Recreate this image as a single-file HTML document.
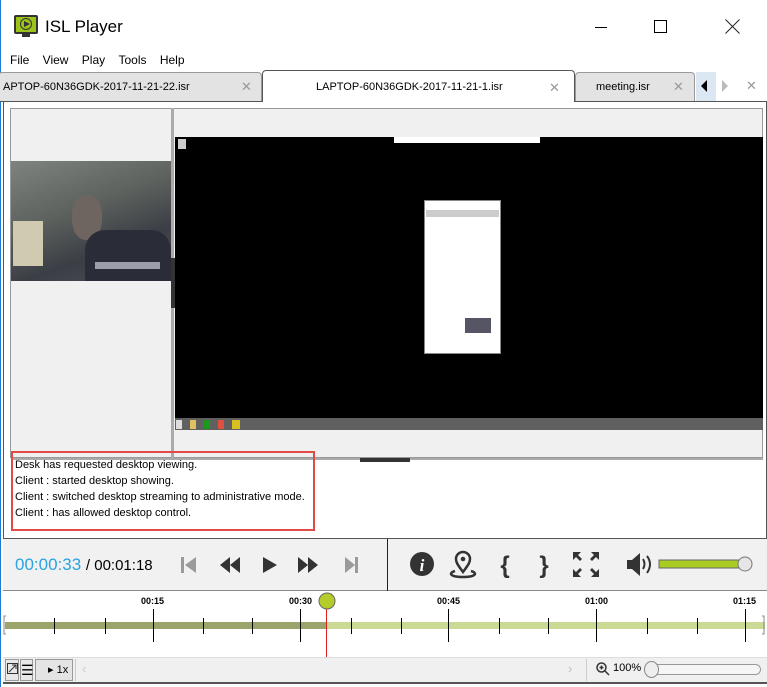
<!DOCTYPE html>
<html><head><style>
*{margin:0;padding:0;box-sizing:border-box}
body{width:767px;height:687px;overflow:hidden;background:#fff;font-family:"Liberation Sans",sans-serif;position:relative;font-size:12px;color:#000}
.a{position:absolute}
.tab{position:absolute;top:72px;height:29px;border:1px solid #999;border-bottom:none;background:#e3e3e3;font-size:11px;line-height:28px;border-radius:4px 4px 0 0}
.x{position:absolute;color:#999;font-size:13px;top:0}
.log div{height:16px;line-height:16px;font-size:11px;padding-left:5px}
.tl{position:absolute;font-size:9px;font-weight:bold;top:596px}
</style></head><body>
<div class="a" style="left:0;top:0;width:1px;height:687px;background:#1e7bd6"></div>
<div class="a" style="left:14px;top:15px;width:24px;height:19px;background:#9cc31a;border:2px solid #333;border-radius:2px"></div>
<div class="a" style="left:20px;top:18px;width:12px;height:12px;border:1.5px solid #333;border-radius:50%"></div>
<div class="a" style="left:24px;top:21px;width:0;height:0;border-left:6px solid #333;border-top:3.5px solid transparent;border-bottom:3.5px solid transparent"></div>
<div class="a" style="left:22px;top:34px;width:8px;height:3px;background:#333"></div>
<div class="a" style="left:45px;top:17px;font-size:17px">ISL Player</div>
<div class="a" style="left:595px;top:27px;width:12px;height:1px;background:#000"></div>
<div class="a" style="left:654px;top:20px;width:13px;height:13px;border:1px solid #000"></div>
<svg class="a" style="left:725px;top:19px" width="15" height="15"><path d="M0.5 0.5L14.5 14.5M14.5 0.5L0.5 14.5" stroke="#222" stroke-width="1"/></svg>
<div class="a" style="left:10px;top:53px;font-size:12px;word-spacing:0">File&nbsp;&nbsp;&nbsp;&nbsp;View&nbsp;&nbsp;&nbsp;&nbsp;Play&nbsp;&nbsp;&nbsp;&nbsp;Tools&nbsp;&nbsp;&nbsp;&nbsp;Help</div>
<div class="a" style="left:0;top:101px;width:767px;height:1px;background:#555"></div>
<div class="tab" style="left:-2px;width:264px;padding-left:4px">APTOP-60N36GDK-2017-11-21-22.isr<span class="x" style="left:242px">✕</span></div>
<div class="tab" style="left:575px;width:120px;padding-left:20px">meeting.isr<span class="x" style="left:97px">✕</span></div>
<div class="tab" style="left:262px;top:70px;height:33px;width:313px;background:#fff;border-color:#555;padding-left:53px;line-height:33px">LAPTOP-60N36GDK-2017-11-21-1.isr<span class="x" style="left:286px">✕</span></div>
<div class="a" style="left:696px;top:72px;width:20px;height:29px;background:#dbe7f3"></div>
<div class="a" style="left:701px;top:80px;border-right:6px solid #000;border-top:6px solid transparent;border-bottom:6px solid transparent"></div>
<div class="a" style="left:722px;top:80px;border-left:6px solid #bbb;border-top:6px solid transparent;border-bottom:6px solid transparent"></div>
<div class="a" style="left:746px;top:78px;color:#999;font-size:13px">✕</div>
<div class="a" style="left:3px;top:102px;width:764px;height:436px;border-left:1px solid #555;border-right:1px solid #555;background:#fff"></div>
<div class="a" style="left:10px;top:108px;width:753px;height:350px;background:#f0f0f0;border:1px solid #999"></div>
<div class="a" style="left:171px;top:108px;width:3px;height:350px;background:#aaa"></div>
<div class="a" style="left:171px;top:258px;width:4px;height:50px;background:#333"></div>
<div class="a" style="left:11px;top:161px;width:160px;height:120px;background:linear-gradient(160deg,#7d837f 0%,#5d625e 40%,#3b3e45 70%,#4d5158 100%)"></div>
<div class="a" style="left:13px;top:221px;width:30px;height:45px;background:#cfcab0"></div>
<div class="a" style="left:72px;top:195px;width:30px;height:45px;border-radius:45%;background:#6f6560"></div>
<div class="a" style="left:85px;top:230px;width:86px;height:51px;background:#2a2d38;border-radius:20px 20px 0 0"></div>
<div class="a" style="left:95px;top:262px;width:65px;height:7px;background:#9a9ea8"></div>
<div class="a" style="left:175px;top:137px;width:588px;height:293px;background:#000"></div>
<div class="a" style="left:175px;top:418px;width:588px;height:12px;background:#606060"></div>
<div class="a" style="left:176px;top:420px;width:68px;height:9px;background:linear-gradient(90deg,#ddd 0 6px,#606060 6px 14px,#e0c060 14px 20px,#606060 20px 28px,#1a9a1a 28px 34px,#606060 34px 42px,#e05040 42px 48px,#606060 48px 56px,#d8c020 56px 64px,#606060 64px)"></div>
<div class="a" style="left:178px;top:139px;width:8px;height:10px;background:#ccc"></div>
<div class="a" style="left:394px;top:137px;width:146px;height:6px;background:#fff"></div>
<div class="a" style="left:424px;top:200px;width:77px;height:154px;background:#fff;border:1px solid #888"></div>
<div class="a" style="left:426px;top:210px;width:73px;height:7px;background:#ccc"></div>
<div class="a" style="left:465px;top:318px;width:26px;height:15px;background:#556"></div>
<div class="a" style="left:11px;top:458px;width:752px;height:2px;background:#aaa"></div>
<div class="a" style="left:360px;top:458px;width:50px;height:4px;background:#333"></div>
<div class="a log" style="left:10px;top:457px;width:300px">
<div>Desk has requested desktop viewing.</div><div>Client : started desktop showing.</div><div>Client : switched desktop streaming to administrative mode.</div><div>Client : has allowed desktop control.</div></div>
<div class="a" style="left:11px;top:451px;width:304px;height:80px;border:2px solid #e24a45"></div>
<div class="a" style="left:3px;top:538px;width:764px;height:53px;background:#f1f1f1;border-top:1px solid #555;border-bottom:1px solid #888"></div>
<div class="a" style="left:387px;top:539px;width:1px;height:52px;background:#222"></div>
<div class="a" style="left:15px;top:555px;font-size:17px;color:#29a3e0">00:00:33 <span style="color:#000;font-size:15px">/ 00:01:18</span></div>
<svg class="a" style="left:175px;top:552px" width="200" height="26">
<g fill="#9a9a9a"><rect x="6" y="5" width="3" height="16"/><path d="M21 5 L10 13 L21 21Z"/></g>
<g fill="#333"><path d="M55 5 L45 13 L55 21Z M65 5 L55 13 L65 21Z"/><path d="M88 5 L102 13 L88 21Z"/><path d="M123 5 L133 13 L123 21Z M133 5 L143 13 L133 21Z"/></g>
<g fill="#9a9a9a"><path d="M170 5 L180 13 L170 21Z"/><rect x="180" y="5" width="3" height="16"/></g>
</svg>
<svg class="a" style="left:405px;top:548px" width="360" height="34">
<circle cx="17" cy="16" r="12" fill="#333"/><text x="17" y="23" font-family="Liberation Serif" font-style="italic" font-weight="bold" font-size="17" fill="#fff" text-anchor="middle">i</text>
<path d="M58 24 C52 16 51 14 51 11 a7 7 0 0 1 14 0 c0 3 -1 5 -7 13Z" fill="none" stroke="#333" stroke-width="2.5"/><circle cx="58" cy="11" r="2.3" fill="#333"/>
<path d="M50 23 c-7 2 -5 6 8 6 c13 0 15 -4 8 -6" fill="none" stroke="#333" stroke-width="2.5"/>
<text x="100" y="25" font-size="24" font-weight="bold" fill="#333" text-anchor="middle">{</text>
<text x="139" y="25" font-size="24" font-weight="bold" fill="#333" text-anchor="middle">}</text>
<g fill="#333"><path d="M168 4h8l-3 3 4 4-2 2-4-4-3 3z"/><path d="M194 4h-8l3 3-4 4 2 2 4-4 3 3z"/><path d="M168 29h8l-3-3 4-4-2-2-4 4-3-3z"/><path d="M194 29h-8l3-3-4-4 2-2 4 4 3-3z"/></g>
<path d="M222 12h5l8-7v23l-8-7h-5z" fill="#333"/>
<path d="M238 11 q3 5 0 10 M242 8 q6 8 0 17" stroke="#333" stroke-width="2" fill="none"/>
<rect x="254" y="12" width="84" height="8" fill="#a8cc22" stroke="#666"/>
<circle cx="340" cy="16" r="7" fill="#e6e6e6" stroke="#777"/>
</svg>
<svg class="a" style="left:3px;top:591px" width="764" height="66">
<rect x="0" y="0" width="764" height="66" fill="#fff"/>
<rect x="2" y="31" width="322" height="7" fill="#9aa46b"/>
<rect x="324" y="31" width="438" height="7" fill="#cad993"/>
<g stroke="#000" stroke-width="1">
<path d="M51.5 27v16M102.5 27v16M200.5 27v16M249.5 27v16M348.5 27v16M398.5 27v16M496.5 27v16M545.5 27v16M644.5 27v16M694.5 27v16"/>
<path d="M150.5 18v33M297.5 18v33M445.5 18v33M593.5 18v33M742.5 18v33"/>
</g>
<path d="M3 25h-2v18h2M759 25h2v18h-2" stroke="#888" fill="none"/>
<line x1="323.5" y1="16" x2="323.5" y2="66" stroke="#e02020"/>
<circle cx="324" cy="10" r="8" fill="#b5cc2a" stroke="#666"/>
</svg>
<div class="tl" style="left:141px">00:15</div>
<div class="tl" style="left:289px">00:30</div>
<div class="tl" style="left:437px">00:45</div>
<div class="tl" style="left:585px">01:00</div>
<div class="tl" style="left:733px">01:15</div>
<div class="a" style="left:3px;top:657px;width:764px;height:27px;background:#f0f0f0;border-top:1px solid #ddd;border-bottom:2px solid #555"></div>
<div class="a" style="left:5px;top:659px;width:14px;height:22px;border:1px solid #999;background:#e8e8e8"></div>
<svg class="a" style="left:7px;top:663px" width="12" height="12"><rect x="0.5" y="0.5" width="10" height="10" fill="none" stroke="#333"/><path d="M2 9L9 2M5 2h4v4" stroke="#333" fill="none"/></svg>
<div class="a" style="left:20px;top:659px;width:13px;height:22px;border:1px solid #999;background:#e8e8e8;font-size:14px;line-height:20px;text-align:center">☰</div>
<div class="a" style="left:35px;top:659px;width:38px;height:22px;border:1px solid #999;background:#e4e4e4;font-size:11px;line-height:20px;padding-left:12px">▸ 1x</div>
<div class="a" style="left:75px;top:659px;width:1px;height:22px;background:#ccc"></div>
<div class="a" style="left:82px;top:661px;color:#ccc;font-size:13px">‹</div>
<div class="a" style="left:568px;top:661px;color:#bbb;font-size:13px">›</div>
<div class="a" style="left:586px;top:659px;width:1px;height:22px;background:#ccc"></div>
<svg class="a" style="left:596px;top:662px" width="14" height="14"><circle cx="5.5" cy="5.5" r="4.5" fill="none" stroke="#333" stroke-width="1.5"/><path d="M9 9l4 4M3.5 5.5h4M5.5 3.5v4" stroke="#333" stroke-width="1.5"/></svg>
<div class="a" style="left:613px;top:662px;font-size:11px">100%</div>
<div class="a" style="left:645px;top:664px;width:116px;height:11px;border:1px solid #999;border-radius:6px;background:#f6f6f6"></div>
<div class="a" style="left:644px;top:661px;width:15px;height:17px;border:1px solid #888;border-radius:50%;background:#eee"></div>
</body></html>
